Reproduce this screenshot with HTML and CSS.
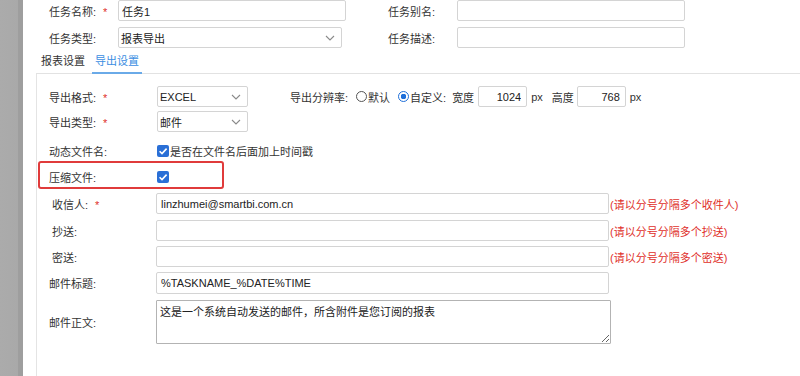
FILE: index.html
```html
<!DOCTYPE html>
<html lang="zh-CN">
<head>
<meta charset="utf-8">
<title>任务设置</title>
<link rel="stylesheet" href="styles.css">
</head>
<body>
<div class="app">
  <div class="side"></div>
  <div class="main">
    <div class="top">
      <div class="trow">
        <div class="tfield">
          <span class="tlbl">任务名称:<span class="req">*</span></span>
          <input class="inp w228" value="任务1">
        </div>
        <div class="tfield">
          <span class="tlbl">任务别名:</span>
          <input class="inp w228" value="">
        </div>
      </div>
      <div class="trow">
        <div class="tfield">
          <span class="tlbl">任务类型:</span>
          <div class="sel w224">报表导出<svg class="chev" width="10" height="6" viewBox="0 0 10 6"><polyline points="1,1 5,5 9,1" fill="none" stroke="#8a8a8a" stroke-width="1.1"/></svg></div>
        </div>
        <div class="tfield">
          <span class="tlbl">任务描述:</span>
          <input class="inp w228" value="">
        </div>
      </div>
    </div>

    <div class="tabs-wrap">
      <div class="tabbar">
        <span class="tab">报表设置</span>
        <span class="tab active">导出设置</span>
      </div>
      <div class="panel">
        <div class="row mb4">
          <span class="lbl">导出格式:<span class="req">*</span></span>
          <div class="sel w91">EXCEL<svg class="chev" width="10" height="6" viewBox="0 0 10 6"><polyline points="1,1 5,5 9,1" fill="none" stroke="#8a8a8a" stroke-width="1.1"/></svg></div>
          <div class="res">
            <span class="reslbl">导出分辨率:</span>
            <span class="radio"></span><span>默认</span>
            <span class="radio on"></span><span>自定义:</span>
            <span class="dim">宽度</span>
            <input class="inp num" value="1024">
            <span class="px">px</span>
            <span class="dim h">高度</span>
            <input class="inp num" value="768">
            <span class="px">px</span>
          </div>
        </div>
        <div class="row mb8">
          <span class="lbl">导出类型:<span class="req">*</span></span>
          <div class="sel w91">邮件<svg class="chev" width="10" height="6" viewBox="0 0 10 6"><polyline points="1,1 5,5 9,1" fill="none" stroke="#8a8a8a" stroke-width="1.1"/></svg></div>
        </div>
        <div class="row mb5">
          <span class="lbl">动态文件名:</span>
          <span class="chk"><svg width="12" height="12" viewBox="0 0 12 12"><polyline points="2.6,6.2 5,8.6 9.6,3.6" fill="none" stroke="#fff" stroke-width="1.6"/></svg></span>
          <span>是否在文件名后面加上时间戳</span>
        </div>
        <div class="row mb6 marked">
          <span class="lbl">压缩文件:</span>
          <span class="chk"><svg width="12" height="12" viewBox="0 0 12 12"><polyline points="2.6,6.2 5,8.6 9.6,3.6" fill="none" stroke="#fff" stroke-width="1.6"/></svg></span>
        </div>
        <div class="row mb6">
          <span class="lbl2 ind">收信人:<span class="req">*</span></span>
          <input class="inp wide" value="linzhumei@smartbi.com.cn">
          <span class="hint">(请以分号分隔多个收件人)</span>
        </div>
        <div class="row mb5">
          <span class="lbl2 ind">抄送:</span>
          <input class="inp wide" value="">
          <span class="hint">(请以分号分隔多个抄送)</span>
        </div>
        <div class="row mb5">
          <span class="lbl2 ind">密送:</span>
          <input class="inp wide" value="">
          <span class="hint">(请以分号分隔多个密送)</span>
        </div>
        <div class="row mb6">
          <span class="lbl2">邮件标题:</span>
          <input class="inp wide tall" value="%TASKNAME_%DATE%TIME">
        </div>
        <div class="row">
          <span class="lbl2">邮件正文:</span>
          <textarea class="area">这是一个系统自动发送的邮件，所含附件是您订阅的报表</textarea>
        </div>
      </div>
    </div>
  </div>
</div>
</body>
</html>
```

FILE: styles.css
```css
* { box-sizing: border-box; }
html, body {
  margin: 0;
  padding: 0;
  background: #fff;
}
body {
  width: 800px;
  height: 376px;
  overflow: hidden;
  font-family: "Liberation Sans", "Noto Sans CJK SC", sans-serif;
  font-size: 11px;
  color: #333;
}
.app {
  display: flex;
  height: 376px;
}
.side {
  width: 23px;
  flex: none;
  background: linear-gradient(to right, #ababab 0, #a9a9a9 18px, #9e9e9e 18px, #9e9e9e 23px);
}
.main {
  flex: 1;
  background: #fff;
  min-width: 0;
}
.top {
  padding-left: 26px;
}
.trow {
  display: flex;
  align-items: center;
  height: 21px;
  margin-bottom: 6px;
}
.trow:last-child {
  margin-bottom: 0;
}
.tfield {
  display: flex;
  align-items: center;
}
.tfield:first-child {
  width: 339px;
  flex: none;
}
.tlbl {
  width: 69px;
  flex: none;
}
.req {
  color: #e0302b;
  margin-left: 7px;
}
.inp {
  font: inherit;
  color: #222;
  height: 21px;
  border: 1px solid #d4d4d4;
  border-radius: 2px;
  padding: 0 3px;
  background: #fff;
  outline: none;
  margin: 0;
}
.w228 { width: 228px; }
.w224 { width: 224px; }
.w91 { width: 91px; }
.sel {
  height: 21px;
  border: 1px solid #d4d4d4;
  border-radius: 2px;
  padding: 0 2px;
  display: flex;
  align-items: center;
  justify-content: space-between;
  color: #222;
  background: #fff;
}
.chev {
  margin-right: 4px;
}
.tabs-wrap {
  margin-left: 13px;
}
.tabbar {
  height: 26px;
  border-bottom: 1px solid #e2e2e2;
  display: flex;
  align-items: stretch;
  padding-left: 2px;
}
.tab {
  display: flex;
  align-items: center;
  padding: 0 3px;
  color: #333;
  margin-right: 4px;
  border-bottom: 2px solid transparent;
  margin-bottom: -1px;
}
.tab.active {
  color: #3b8ee2;
  border-bottom-color: #6aaae8;
  padding: 0 3px;
}
.panel {
  border-left: 1px solid #e4e4e4;
  padding: 12px 0 40px 12px;
  min-height: 310px;
}
.row {
  display: flex;
  align-items: center;
  min-height: 21px;
  position: relative;
}
.mb4 { margin-bottom: 4px; }
.mb5 { margin-bottom: 5px; }
.mb6 { margin-bottom: 6px; }
.mb8 { margin-bottom: 8px; }
.lbl {
  width: 108px;
  flex: none;
}
.lbl2 {
  width: 107px;
  flex: none;
}
.lbl2.ind {
  padding-left: 3px;
}
.res {
  display: flex;
  align-items: center;
  margin-left: 42px;
}
.reslbl {
  margin-right: 8px;
}
.radio {
  width: 11px;
  height: 11px;
  border: 1px solid #555;
  border-radius: 50%;
  display: inline-block;
  flex: none;
  margin-right: 1px;
}
.radio.on {
  margin-left: 8px;
  border: 1.5px solid #1e6fd9;
  background: radial-gradient(circle, #1e6fd9 0 2.6px, #fff 3px);
}
.dim {
  margin-left: 6px;
  margin-right: 4px;
}
.dim.h {
  margin-left: 9px;
  margin-right: 3px;
}
.num {
  width: 49px;
  text-align: right;
  padding-right: 5px;
}
.px {
  margin-left: 4px;
}
.chk {
  width: 12px;
  height: 12px;
  border-radius: 2px;
  background: #2a6fd6;
  display: inline-flex;
  flex: none;
  margin-right: 1px;
}
.marked::after {
  content: "";
  position: absolute;
  left: -11px;
  top: -5px;
  width: 182px;
  height: 24px;
  border: 2px solid #e03b3b;
  border-radius: 3px;
}
.wide {
  width: 453px;
  padding-left: 4px;
}
.tall {
  height: 22px;
}
.hint {
  color: #e0302b;
  margin-left: 1px;
}
.area {
  font: inherit;
  color: #222;
  width: 455px;
  height: 44px;
  border: 1px solid #b3b3b3;
  border-radius: 1px;
  padding: 2px 3px;
  margin: 0;
  outline: none;
  resize: both;
}
```
